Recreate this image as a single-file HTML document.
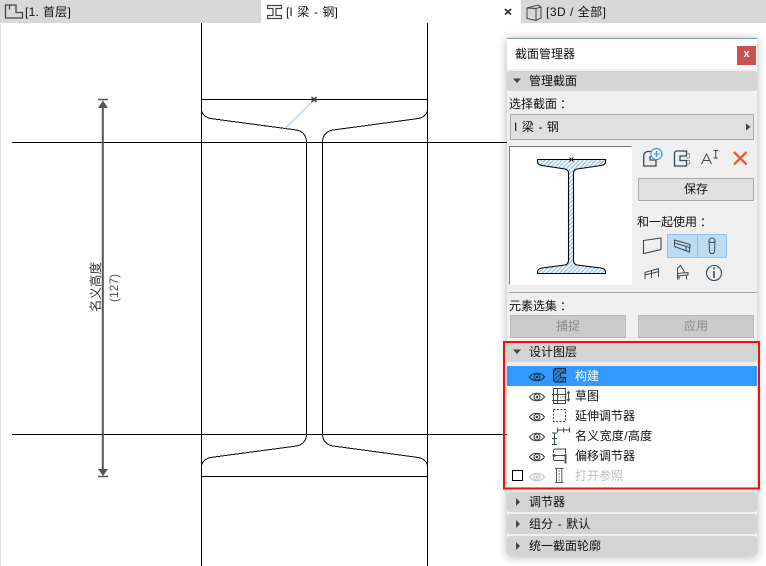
<!DOCTYPE html>
<html><head><meta charset="utf-8">
<style>
html,body{margin:0;padding:0;width:766px;height:566px;overflow:hidden;background:#fff}
body{position:relative;font-family:"Liberation Sans","Noto Sans CJK SC",sans-serif;font-size:12px;color:#111}
.a{position:absolute}
.t{position:absolute;white-space:nowrap;line-height:16px;height:16px}
.t i{font-style:normal;margin-left:3px}
.h{position:absolute;left:507px;width:250px;height:20px;background:#d4d4d4;border-radius:3px}
.b{position:absolute;box-sizing:border-box;height:23px;width:116px;background:#e0e0e0;border:1px solid #aaa;text-align:center;line-height:21px}
.d{background:#cbcbcb;color:#8a8a8a;border-color:#bbb}
svg{position:absolute;left:0;top:0}
</style></head><body>
<div class="a" style="left:0;top:0;width:766px;height:23px;background:#d8d8d8"></div>
<div class="a" style="left:0;top:23px;width:1px;height:543px;background:#ddd"></div>
<div class="a" style="left:261px;top:0;width:260px;height:23px;background:#fff"></div>
<div class="t" style="left:25px;top:4px;letter-spacing:.3px">[1. 首层]</div>
<div class="t" style="left:286px;top:4px;word-spacing:1px;letter-spacing:.1px">[I 梁 - 钢]</div>
<div class="t" style="left:546px;top:4px;letter-spacing:.5px">[3D / 全部]</div>

<!-- panel -->
<div class="a" style="left:507px;top:38px;width:250px;height:518px;background:#efefef;box-shadow:0 1px 9px rgba(0,0,0,.3)"></div>
<div class="a" style="left:507px;top:38px;width:250px;height:31px;background:#fff;border-top:1px solid #7b9bb5;box-sizing:border-box"></div>
<div class="a" style="left:737px;top:46px;width:19px;height:19px;background:#c85050;color:#fff;font-weight:bold;text-align:center;line-height:17px;font-size:11px">x</div>
<div class="t" style="left:515px;top:46px">截面管理器</div>
<div class="h" style="top:71px"></div>
<div class="t" style="left:529px;top:73px">管理截面</div>
<div class="t" style="left:509px;top:96px">选择截面<i>：</i></div>
<div class="a" style="left:510px;top:114px;width:244px;height:26px;box-sizing:border-box;background:#e0e0e0;border:1px solid #aaa"></div>
<div class="t" style="left:514px;top:119px;word-spacing:1px;letter-spacing:.1px">I 梁 - 钢</div>
<div class="a" style="left:509px;top:146px;width:123px;height:139px;box-sizing:border-box;background:#fff;border:1px solid #fff;border-top:1px solid #777;border-left:1px solid #777"></div>
<div class="b" style="left:638px;top:178px">保存</div>
<div class="t" style="left:637px;top:214px">和一起使用<i>：</i></div>
<div class="a" style="left:667px;top:234px;width:31px;height:24px;box-sizing:border-box;background:#bddcf3;border:1px solid #90c4f0"></div>
<div class="a" style="left:697px;top:234px;width:30px;height:24px;box-sizing:border-box;background:#bddcf3;border:1px solid #90c4f0"></div>
<div class="a" style="left:509px;top:292px;width:248px;height:1px;background:#aaa"></div>
<div class="t" style="left:509px;top:298px">元素选集<i>：</i></div>
<div class="b d" style="left:510px;top:315px">捕捉</div>
<div class="b d" style="left:638px;top:315px">应用</div>

<div class="h" style="top:342px"></div>
<div class="t" style="left:529px;top:344px">设计图层</div>
<div class="a" style="left:507px;top:366px;width:250px;height:121px;background:#fff"></div>
<div class="a" style="left:507px;top:366px;width:250px;height:20px;background:#3399ff"></div>
<div class="t" style="left:575px;top:368px;color:#fff">构建</div>
<div class="t" style="left:575px;top:388px">草图</div>
<div class="t" style="left:575px;top:408px">延伸调节器</div>
<div class="t" style="left:575px;top:428px;letter-spacing:.3px">名义宽度/高度</div>
<div class="t" style="left:575px;top:448px">偏移调节器</div>
<div class="t" style="left:575px;top:468px;color:#bbb">打开参照</div>
<div class="h" style="top:492px"></div>
<div class="t" style="left:529px;top:494px">调节器</div>
<div class="h" style="top:514px"></div>
<div class="t" style="left:529px;top:516px;word-spacing:1px;letter-spacing:.1px">组分 - 默认</div>
<div class="h" style="top:536px"></div>
<div class="t" style="left:529px;top:538px">统一截面轮廓</div>

<svg width="766" height="566" viewBox="0 0 766 566" fill="none">
<defs>
<pattern id="h" width="3" height="3" patternUnits="userSpaceOnUse" patternTransform="rotate(-45)"><rect width="3" height="3" fill="#fff"/><rect width="3" height="1.4" fill="#9cc6ee"/></pattern>
<pattern id="h2" width="3" height="3" patternUnits="userSpaceOnUse" patternTransform="rotate(-45)"><rect width="3" height="3" fill="#3f8ad8"/><rect width="3" height="1.3" fill="#1d4f86"/></pattern>
<g id="eye" stroke="#444" stroke-width="1.1"><path d="M-7.500 0C-4 -5 4 -5 7.500 0C4 5 -4 5 -7.500 0Z"/><circle r="3"/><circle r=".8" fill="#444"/></g>
<g id="eyed" stroke="#1c3550" stroke-width="1.1"><path d="M-7.500 0C-4 -5 4 -5 7.500 0C4 5 -4 5 -7.500 0Z"/><circle r="3"/><circle r=".8" fill="#1c3550"/></g>
</defs>
<!-- tab icons -->
<path d="M5.500 18V5H16V12.500H22.500V18ZM9.500 5V9.500" stroke="#444" stroke-width="1.300"/>
<path d="M267.500 5.500H281.500V8.500H276V15.500H281.500V18.500H267.500V15.500H273V8.500H267.500Z" stroke="#444" stroke-width="1.200"/>
<path d="M527 8L538 5L541 7V18L536 20.500L527 18.500ZM527 8L536 8.500V20.500M536 8.500L541 7" stroke="#444"/>
<path d="M505 9L511 14.500M511 9L505 14.500" stroke="#333" stroke-width="1.800"/>

<!-- drawing -->
<g stroke="#000" stroke-width="1" shape-rendering="crispEdges">
<path d="M201.500 23V566M427.500 23V566M12 142.500H507M12 434.500H507M201 99.500H428M201 476.500H428"/>
<path d="M306.500 140V436M322.500 140V436"/>
<path d="M201.500 111C203 116 207 118 212 118.700L296.500 130C302 131 306.500 135 306.500 142M427.500 111C426 116 422 118 417 118.700L333 130C327 131 322.500 135 322.500 142"/>
<path d="M201.500 465C203 460 207 458 212 457.300L296.500 446C302 445 306.500 441 306.500 434M427.500 465C426 460 422 458 417 457.300L333 446C327 445 322.500 441 322.500 434"/>
</g>
<path d="M285 128.500L313 101" stroke="#9cc6ee"/>
<path d="M311.500 97L316.500 102M316.500 97L311.500 102" stroke="#444" stroke-width="1.600"/>
<!-- dimension -->
<path d="M102.800 103V474" stroke="#555" stroke-width="2"/>
<path d="M98 99.500H108M98 476.500H108" stroke="#555" stroke-width="1.400"/>
<path d="M98 108L103 100.500L108 108ZM98 469L103 476L108 469Z" fill="#555"/>
<g fill="#333" font-family='"Liberation Sans","Noto Sans CJK SC",sans-serif' font-size="12.500">
<text transform="translate(100,312) rotate(-90)">名义高度</text>
<text transform="translate(118,302) rotate(-90)" fill="#555" font-size="12">(127)</text>
</g>

<!-- header triangles -->
<g fill="#444">
<path d="M513 78.500H521L517 83ZM513 349.500H521L517 354Z"/>
<path d="M516 498L520 502L516 506ZM516 520L520 524L516 528ZM516 542L520 546L516 550Z"/>
<path d="M746 123.500L750.500 127L746 130.500Z"/>
</g>

<!-- preview beam -->
<path d="M537.500 159.500H605.500V162C605.500 164 604 165 601 165.500L577 169C575 169.500 573.500 171 573.500 173V260C573.500 263 575 264.500 577 265L601 268C604 268.500 605.500 270 605.500 272V273.500H537.500V272C537.500 270 539 268.500 542 268L565 265C567 264.500 568.500 263 568.500 260V173C568.500 171 567 169.500 565 169L542 165.500C539 165 537.500 164 537.500 162Z" fill="url(#h)" stroke="#000" stroke-width="1.100"/>
<path d="M569.500 157.500L573.500 161.500M573.500 157.500L569.500 161.500" stroke="#222"/>

<!-- toolbar icons -->
<g stroke="#3c4a52" stroke-width="1.300">
<path d="M652 151.500H648C645.500 151.500 643.700 153.500 643.700 156V166H656V160H650V156"/>
<path d="M686.500 151H677C675.500 151 674.500 152 674.500 153.500V166H686.500V160.500H680V156H686.500Z"/>
<path d="M686.500 153.500H689.500V158H686M687 160.500H689.500V164H686.500" stroke="#999" stroke-width="1.100"/>
<path d="M701.500 164L706.500 154L711.500 164M703.500 160.500H709.500" stroke-width="1"/>
<path d="M713.500 150.500H718M715.700 150.500V158M713.500 158H718" stroke-width="1"/>
</g>
<circle cx="656.500" cy="154" r="5.500" stroke="#3d96ee" stroke-width="1.200" fill="#fff"/>
<path d="M653.500 154H659.500M656.500 151V157" stroke="#3d96ee" stroke-width="1.200"/>
<path d="M734 152L746.500 164.500M746.500 152L734 164.500" stroke="#f05a28" stroke-width="2.300"/>

<!-- with icons -->
<g stroke="#3c4a52" stroke-width="1.100">
<path d="M643.500 240.500L661 238V249.500L643.500 253.500Z"/>
<path d="M674.500 240L690 244.500V247.500L674.500 243ZM674.500 243V246.500L689.500 252V247.500M686 246.500V251" stroke-width="1"/>
<path d="M709 241C709 237 715 237 715 241L714.500 251C714.500 254.500 709.500 254.500 709.500 251ZM709 241C710 243 714 243 715 241" stroke-width="1"/>
<path d="M645 272V279M651.500 270V278M658.500 268.500V277M644.500 272.500L659 268.500M644.500 275L659 271.500" stroke-width="1"/>
<path d="M677.500 279.500V268.500L680.500 265.500L684 271V273M677.500 273.500L688 272.500V275L677.500 276M679 276V279.500M686.500 275V279.500" stroke-width="1"/>
<circle cx="714" cy="273" r="7.500"/>
<path d="M714 271V278M714 267.500V269.500" stroke-width="1.600"/>
</g>

<!-- eyes -->
<use href="#eyed" x="537" y="377"/>
<use href="#eye" x="537" y="397"/>
<use href="#eye" x="537" y="417"/>
<use href="#eye" x="537" y="437"/>
<use href="#eye" x="537" y="457"/>
<g opacity=".3"><use href="#eye" x="537" y="477"/></g>
<rect x="512.500" y="470.500" width="10" height="10" stroke="#000"/>

<!-- layer icons -->
<path d="M556.500 368.500H565.500V373H560.500V377.500H565.500V382H556.500Q553.500 382 553.500 379V371.500Q553.500 368.500 556.500 368.500Z" fill="url(#h2)" stroke="#1c3550" stroke-width="1.200"/>
<g stroke="#3c4a52" stroke-width="1">
<path d="M553.500 388.500H565.500V403.500H553.500ZM557.500 388.500V403.500M552 394.500H566.500M552 400.500H566.500M568.500 392V400.500M567 393.500L568.500 391.500L570 393.500M567 399L568.500 401L570 399"/>
</g>
<path d="M558 397H565" stroke="#777" stroke-dasharray="1 1"/>
<path d="M553.500 409.500H565.500V421.500H553.500Z" stroke="#3c4a52" stroke-dasharray="2 1.500"/>
<g stroke="#3c4a52" stroke-width="1">
<path d="M557.500 427.500V432.500M563.500 427.500V432.500M569.500 427.500V432.500M557.500 430H569.500"/>
<path d="M552 433H557M552 438.500H557M552 444.500H557M554.500 433V444.500"/>
<path d="M553.500 453V451Q553.500 449 556 449H565.500V453.500M552.500 455.500H566M553.500 455.500V459Q553.500 460.500 555 460.500H564"/>
<path d="M565.500 454V463.500" stroke-width="1.800"/>
<circle cx="554" cy="455.500" r="1" fill="#3c4a52"/>
<path d="M556.500 468.500V482.500M561.800 468.500V482.500M555 468.500H563.500M555 482.500H563.500" stroke="#555"/>
<path d="M559.200 470V481" stroke="#888" stroke-dasharray="2 1"/>
</g>

<!-- red highlight -->
<rect x="504" y="342" width="255" height="146.500" stroke="#f01010" stroke-width="2"/>
</svg>
</body></html>
